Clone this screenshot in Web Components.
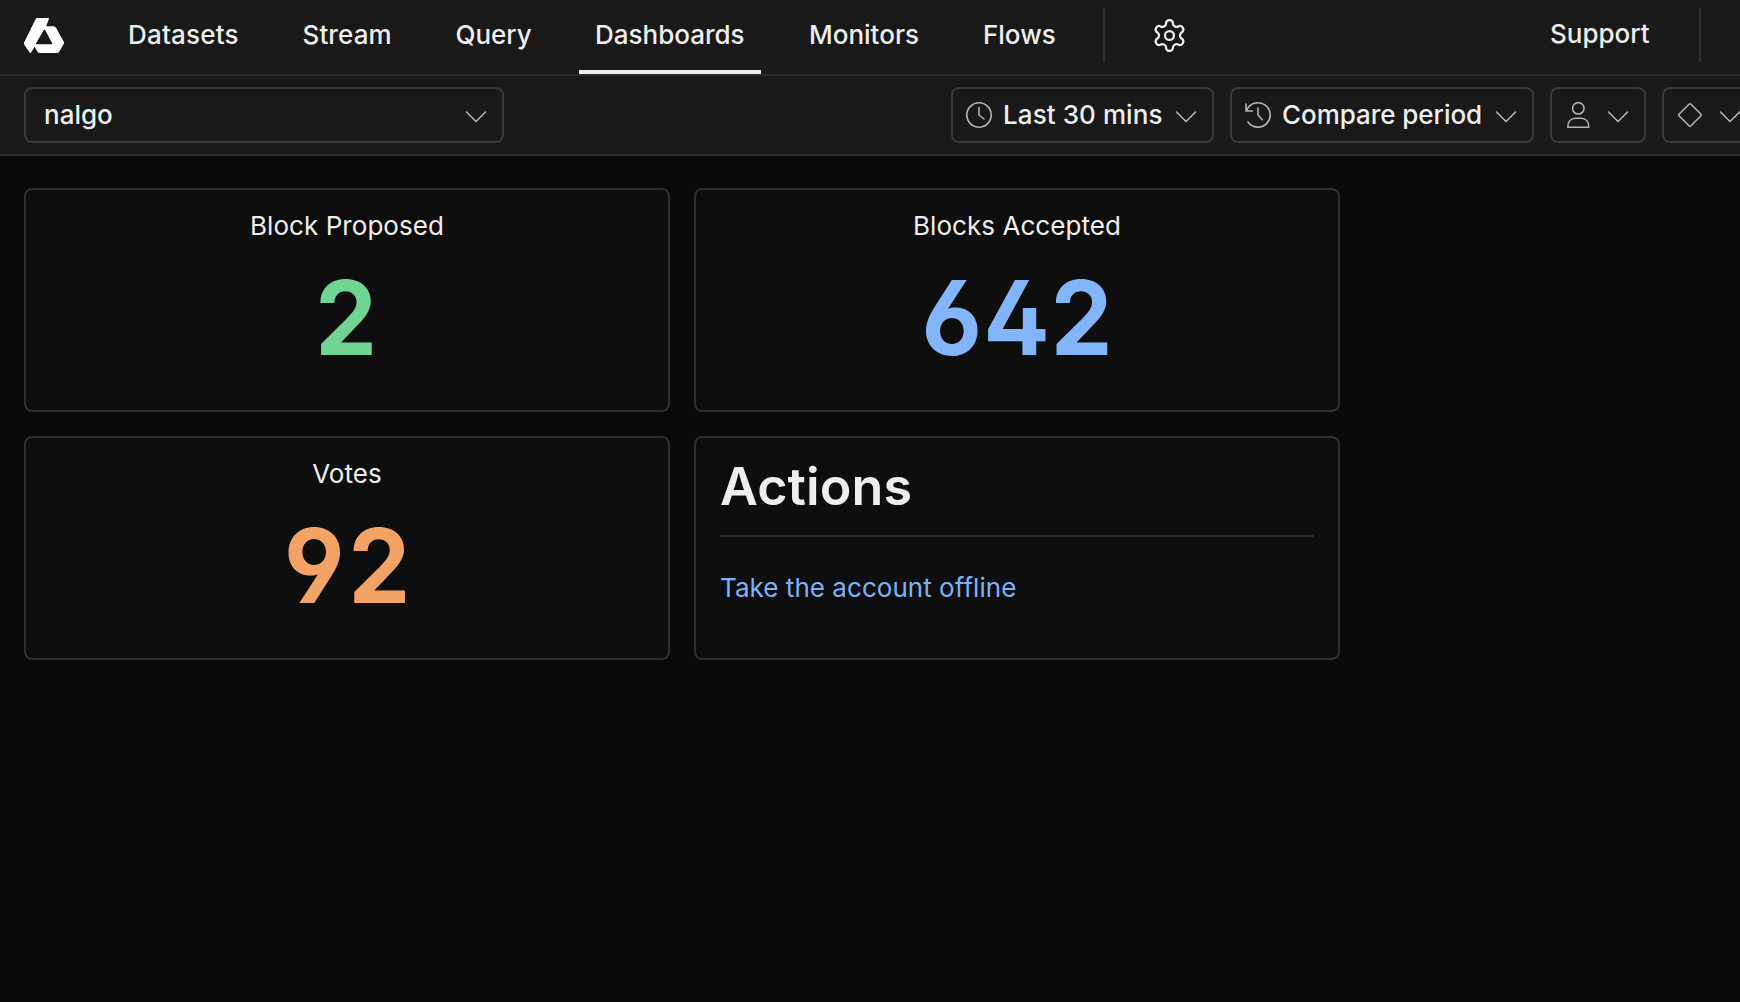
<!DOCTYPE html>
<html lang="en">
<head>
<meta charset="utf-8">
<title>Dashboards</title>
<style>
  html, body { margin: 0; height: 100%; background: #0a0a0a; overflow: hidden; }
  body { font: 500 26px/32px Inter, sans-serif; color: #eee; font-optical-sizing: none; }
</style>
</head>
<body>
<dash-app></dash-app>
<script>
const define = (name, html) => customElements.define(name, class extends HTMLElement {
  connectedCallback() {
    if (this.shadowRoot) return;
    const t = document.createElement('template');
    t.innerHTML = typeof html === 'function' ? html(this) : html;
    this.attachShadow({ mode: 'open' }).append(t.content.cloneNode(true));
  }
});

const icons = {
  logo: ['0 0 44 40', 44, 40, '<path fill="#fff" fill-rule="evenodd" d="M17.6 3H28q1.4 0 .8 1.200L26.200 11.300H33.500q1.700 0 2.500 1.500L43.700 26.600q.7 1.200 0 2.400L39.200 36.700q-.8 1.300-2.300 1.300H19.500q-1.200 0-1.800-1L14.600 31.700 11.400 37q-1 1.900-2.100 0L4.200 29.600q-.7-1.100 0-2.300L15.400 4.400Q16.100 3 17.600 3ZM24 14.800 16 28.200q-.4 1 .6 1H31.700q1 0 .5-1L25 14.800q-.5-.8-1 0Z"/>'],
  gear: ['0 0 24 24', 37, 37, '<g stroke="#eee" stroke-width="1.450"><path d="M12.22 2h-.44a2 2 0 0 0-2 2v.18a2 2 0 0 1-1 1.730l-.43.25a2 2 0 0 1-2 0l-.15-.08a2 2 0 0 0-2.730.73l-.22.38a2 2 0 0 0 .73 2.730l.15.1a2 2 0 0 1 1 1.720v.51a2 2 0 0 1-1 1.740l-.15.09a2 2 0 0 0-.73 2.730l.22.38a2 2 0 0 0 2.730.73l.15-.08a2 2 0 0 1 2 0l.43.25a2 2 0 0 1 1 1.730V20a2 2 0 0 0 2 2h.44a2 2 0 0 0 2-2v-.18a2 2 0 0 1 1-1.730l.43-.25a2 2 0 0 1 2 0l.15.08a2 2 0 0 0 2.730-.73l.22-.39a2 2 0 0 0-.73-2.730l-.15-.08a2 2 0 0 1-1-1.740v-.5a2 2 0 0 1 1-1.740l.15-.09a2 2 0 0 0 .73-2.730l-.22-.38a2 2 0 0 0-2.730-.73l-.15.08a2 2 0 0 1-2 0l-.43-.25a2 2 0 0 1-1-1.730V4a2 2 0 0 0-2-2z"/><circle cx="12" cy="12" r="2.900"/></g>'],
  chevron: ['0 0 24 28', 24, 28, '<path d="M2.500 11 12 20.500 21.500 11"/>'],
  clock: ['0 0 28 28', 28, 28, '<circle cx="14" cy="14" r="12.200"/><path d="M14 6.500V14l5 4"/>'],
  history: ['0 0 28 28', 28, 28, '<path d="M2 3v7h6.500M2.600 9.500A12.200 12.200 0 1 1 4 21M14 7v7l4.300 4.800"/>'],
  user: ['0 0 28 28', 28, 28, '<circle cx="14.300" cy="7.300" r="5.700"/><path d="M3.800 26.200C3.800 20.500 7 17.300 11.500 17.300H17.100C21.600 17.300 24.800 20.500 24.800 26.200Z"/>'],
  diamond: ['0 0 28 28', 28, 28, '<path d="M13 3.200q1-1 2 0L24.800 13q1 1 0 2L15 24.800q-1 1-2 0L3.200 15q-1-1 0-2Z"/>']
};

define('ui-icon', el => {
  const [box, w, h, body] = icons[el.getAttribute('name')];
  return `<style>:host{display:block;flex:none}svg{display:block}</style>
    <svg viewBox="${box}" width="${w}" height="${h}" fill="none" stroke="${w === 44 ? 'none' : '#b4b4b4'}" stroke-width="1.600" stroke-linecap="round" stroke-linejoin="round">${body}</svg>`;
});

define('nav-tab', `
  <style>
    :host { display: flex; box-sizing: border-box; height: 74px; padding: 0 16px; align-items: center; flex: none; white-space: nowrap; border-bottom: 4px solid transparent; }
    :host([active]) { border-bottom-color: #eee; }
  </style><slot></slot>`);

define('nav-rule', `<style>:host{display:block;flex:none;width:2px;height:54px;margin-top:8px;background:#313131}</style>`);

define('top-nav', `
  <style>
    :host { display: flex; height: 74px; background: #191919; border-bottom: 2px solid #2a2a2a; }
    ui-icon.logo { margin: 15px 48px 0 20px; }
    nav { display: flex; }
    nav nav-tab { margin-right: 32px; }
    ui-icon.gear { margin: 17px 0 0 46px; }
    .right { display: flex; margin-left: auto; }
    .support { padding: 0 16px 2px; margin-right: 32px; width: 133px; }
    .end { width: 39px; }
  </style>
  <ui-icon class="logo" name="logo"></ui-icon>
  <nav>
    <nav-tab style="width:142.500px;letter-spacing:.200px">Datasets</nav-tab>
    <nav-tab style="width:121px;letter-spacing:.100px">Stream</nav-tab>
    <nav-tab style="width:107.500px;letter-spacing:-.050px">Query</nav-tab>
    <nav-tab style="width:182px;letter-spacing:0" active>Dashboards</nav-tab>
    <nav-tab style="width:142px;letter-spacing:0">Monitors</nav-tab>
    <nav-tab style="width:104px;letter-spacing:0">Flows</nav-tab>
  </nav>
  <nav-rule></nav-rule>
  <ui-icon class="gear" name="gear"></ui-icon>
  <div class="right">
    <nav-tab class="support">Support</nav-tab>
    <nav-rule></nav-rule><div class="end"></div>
  </div>`);

define('tool-button', el => `
  <style>
    :host { display: flex; box-sizing: border-box; flex: none; height: 56px; align-items: center; border: 2px solid #393939; border-radius: 8px; padding: 0 14px 0 12px; white-space: nowrap; }
    .label { margin-left: var(--label-gap, 10px); }
    .chev { margin-left: auto; }
  </style>
  ${el.hasAttribute('icon') ? `<ui-icon name="${el.getAttribute('icon')}"></ui-icon>` : ''}
  <span class="label"><slot></slot></span>
  <ui-icon class="chev" name="chevron"></ui-icon>`);

define('tool-bar', `
  <style>
    :host { display: flex; box-sizing: border-box; height: 80px; padding: 11px 0 0 24px; gap: 16px; background: #191919; border-bottom: 2px solid #2a2a2a; overflow: hidden; }
    .select { width: 480px; margin-right: 431px; padding-left: 10px; --label-gap: 8px; }
  </style>
  <tool-button class="select">nalgo</tool-button>
  <tool-button icon="clock" style="width:263px;letter-spacing:.080px">Last 30 mins</tool-button>
  <tool-button icon="history" style="width:304px;letter-spacing:-.050px">Compare period</tool-button>
  <tool-button icon="user" style="width:96px"></tool-button>
  <tool-button icon="diamond" style="width:96px"></tool-button>`);

define('panel-card', `
  <style>
    :host { display: flex; flex-direction: column; box-sizing: border-box; height: 224px; background: #0e0e0e; border: 2px solid #303030; border-radius: 8px; }
  </style><slot></slot>`);

define('stat-tile', el => `
  <style>
    :host { display: flex; flex-direction: column; align-items: center; padding-top: 20px; font-weight: 430; letter-spacing: .050px; }
    .value { margin-top: 25px; padding-left: 1.400px; font-weight: 700; font-size: 102.500px; line-height: 102px; letter-spacing: 1.400px; transform: translate(-.5px, -.5px) scaleX(.96); font-feature-settings: 'tnum', 'ss01', 'cv02', 'cv03', 'cv04'; }
  </style>
  <div>${el.getAttribute('label')}</div>
  <div class="value"><slot></slot></div>`);

define('note-panel', `
  <style>
    :host { display: flex; flex-direction: column; padding: 18px 24px 0; }
    h1 { margin: 0; font: 600 52px/62px Inter, sans-serif; letter-spacing: .100px; padding-bottom: 17px; border-bottom: 2px solid #2c2c2c; }
    a { margin-top: 35px; font-weight: 400; color: #7eb2f8; letter-spacing: .040px; }
  </style>
  <h1>Actions</h1>
  <a>Take the account offline</a>`);

define('dash-app', `
  <style>
    :host { display: block; width: 1740px; height: 1002px; overflow: hidden; }
    main { display: grid; grid-template-columns: 646px 646px; gap: 24px; padding: 32px 24px; }
  </style>
  <top-nav></top-nav>
  <tool-bar></tool-bar>
  <main>
    <panel-card><stat-tile label="Block Proposed"><span style="color:#70d492">2</span></stat-tile></panel-card>
    <panel-card><stat-tile label="Blocks Accepted"><span style="color:#82b5f9">642</span></stat-tile></panel-card>
    <panel-card><stat-tile label="Votes"><span style="color:#f3a365">92</span></stat-tile></panel-card>
    <panel-card><note-panel></note-panel></panel-card>
  </main>`);
</script>
</body>
</html>
